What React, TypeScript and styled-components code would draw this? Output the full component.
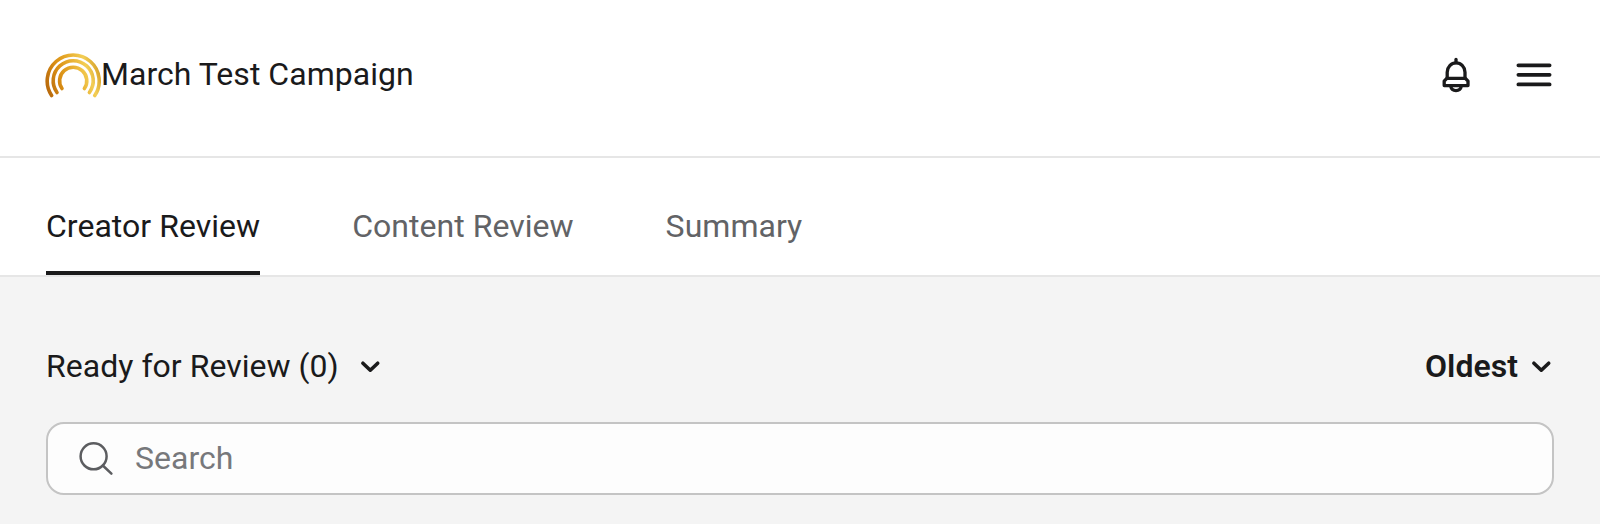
import React from "react";
import styled, { createGlobalStyle } from "styled-components";

const GlobalStyle = createGlobalStyle`
  *, *::before, *::after { box-sizing: border-box; }
  body { margin: 0; background: #f4f4f4; }
  button, input { font: inherit; letter-spacing: inherit; color: inherit; border: 0; padding: 0; background: none; }
`;

const Page = styled.div`
  min-height: 524px;
  background: #f4f4f4;
  color: #1a1a1b;
  font-family: Roboto, "Liberation Sans", sans-serif;
  font-size: 32px;
  line-height: 48px;
  letter-spacing: 0.03px;
`;

const Header = styled.header`
  display: flex;
  align-items: center;
  justify-content: space-between;
  height: 158px;
  padding: 0 47px 6px 45px;
  background: #fff;
  border-bottom: 2px solid #e6e6e6;
`;

const Brand = styled.div`
  display: flex;
  align-items: center;
`;

const Title = styled.span`
  padding-bottom: 2px;
  white-space: nowrap;
`;

const Actions = styled.div`
  display: flex;
  align-items: center;
  gap: 44px;
`;

const IconButton = styled.button`
  display: flex;
`;

const Icon = styled.svg`
  display: block;
  flex: none;
  fill: none;
  stroke: currentColor;
  stroke-linecap: round;
  stroke-linejoin: round;
`;

const Tabs = styled.nav`
  display: flex;
  gap: 92px;
  height: 119px;
  padding: 0 46px;
  background: #fff;
  border-bottom: 2px solid #e6e6e6;
`;

const Tab = styled.button<{ $active?: boolean }>`
  display: flex;
  align-items: flex-start;
  height: 117px;
  padding-top: 44px;
  color: ${(p) => (p.$active ? "#1a1a1b" : "#626366")};
  border-bottom: 4px solid ${(p) => (p.$active ? "#1a1a1b" : "transparent")};
  white-space: nowrap;
`;

const Content = styled.main`
  padding: 65px 46px 0;
`;

const Filters = styled.div`
  display: flex;
  align-items: center;
  justify-content: space-between;
  height: 48px;
`;

const Dropdown = styled.button<{ $gap: number; $bold?: boolean }>`
  display: flex;
  align-items: center;
  gap: ${(p) => p.$gap}px;
  font-weight: ${(p) => (p.$bold ? 600 : 400)};
`;

const SearchField = styled.label`
  display: flex;
  align-items: center;
  gap: 20px;
  height: 73px;
  margin-top: 32px;
  padding: 0 31px;
  background: #fdfdfd;
  border: 2px solid #c4c4c4;
  border-radius: 18px;
  color: #5c5d60;
`;

const SearchInput = styled.input`
  flex: 1;
  min-width: 0;
  height: 50px;
  padding-bottom: 2px;
  outline: none;
  &::placeholder { color: #77787b; opacity: 1; }
`;

const Logo = () => (
  <Icon width="56" height="46" viewBox="45 51.7 56 46" strokeWidth="3.6">
    <defs>
      <linearGradient id="gold" gradientUnits="userSpaceOnUse" x1="47" y1="90" x2="99" y2="72">
        <stop offset="0" stopColor="#b8690c" />
        <stop offset="0.3" stopColor="#d98e14" />
        <stop offset="0.55" stopColor="#e7ab2c" />
        <stop offset="0.82" stopColor="#f3ce55" />
        <stop offset="1" stopColor="#d9a62e" />
      </linearGradient>
    </defs>
    <g stroke="url(#gold)">
      <path d="M51.6 95.2A26 26 0 1 1 94.8 95.2" />
      <path d="M57 92.2A20 20 0 1 1 89.4 92.2" />
      <path d="M62 88.3A13.6 13.6 0 1 1 84.4 88.3" />
    </g>
  </Icon>
);

const Bell = () => (
  <Icon width="30" height="36" viewBox="1441 57 30 36" strokeWidth="3.3">
    <path d="M1456 59.5v3.2" />
    <path d="M1447.2 78V72.2a8.9 9.3 0 0 1 17.8 0v5.8" />
    <path d="M1446.8 78.3h18.6l2.6 2.8v4.5h-23.8V81.1z" />
    <path d="M1450.8 86.5c1 5.4 9.4 5.4 10.4 0" />
  </Icon>
);

const Menu = () => (
  <Icon width="38" height="28" viewBox="0 0 38 28" strokeWidth="3.8">
    <path d="M3.4 4.3h31.2M3.4 13.8h31.2M3.4 23.4h31.2" />
  </Icon>
);

const Chevron = () => (
  <Icon width="24" height="16" viewBox="0 0 24 16" strokeWidth="3.6">
    <path d="M3.9 5.2l7.4 7 7.4-7" />
  </Icon>
);

const SearchIcon = () => (
  <Icon width="36" height="36" viewBox="79 441 36 36" strokeWidth="2.5">
    <circle cx="93.6" cy="456.3" r="13" />
    <path d="M102.8 465.5l8.6 8.2" />
  </Icon>
);

const tabs = ["Creator Review", "Content Review", "Summary"];

export default function App() {
  return (
    <Page>
      <GlobalStyle />
      <Header>
        <Brand>
          <Logo />
          <Title>March Test Campaign</Title>
        </Brand>
        <Actions>
          <IconButton aria-label="Notifications"><Bell /></IconButton>
          <IconButton aria-label="Menu"><Menu /></IconButton>
        </Actions>
      </Header>
      <Tabs>
        {tabs.map((name, i) => (
          <Tab key={name} $active={i === 0}>{name}</Tab>
        ))}
      </Tabs>
      <Content>
        <Filters>
          <Dropdown $gap={20}>Ready for Review (0)<Chevron /></Dropdown>
          <Dropdown $gap={12} $bold>Oldest<Chevron /></Dropdown>
        </Filters>
        <SearchField>
          <SearchIcon />
          <SearchInput placeholder="Search" />
        </SearchField>
      </Content>
    </Page>
  );
}
